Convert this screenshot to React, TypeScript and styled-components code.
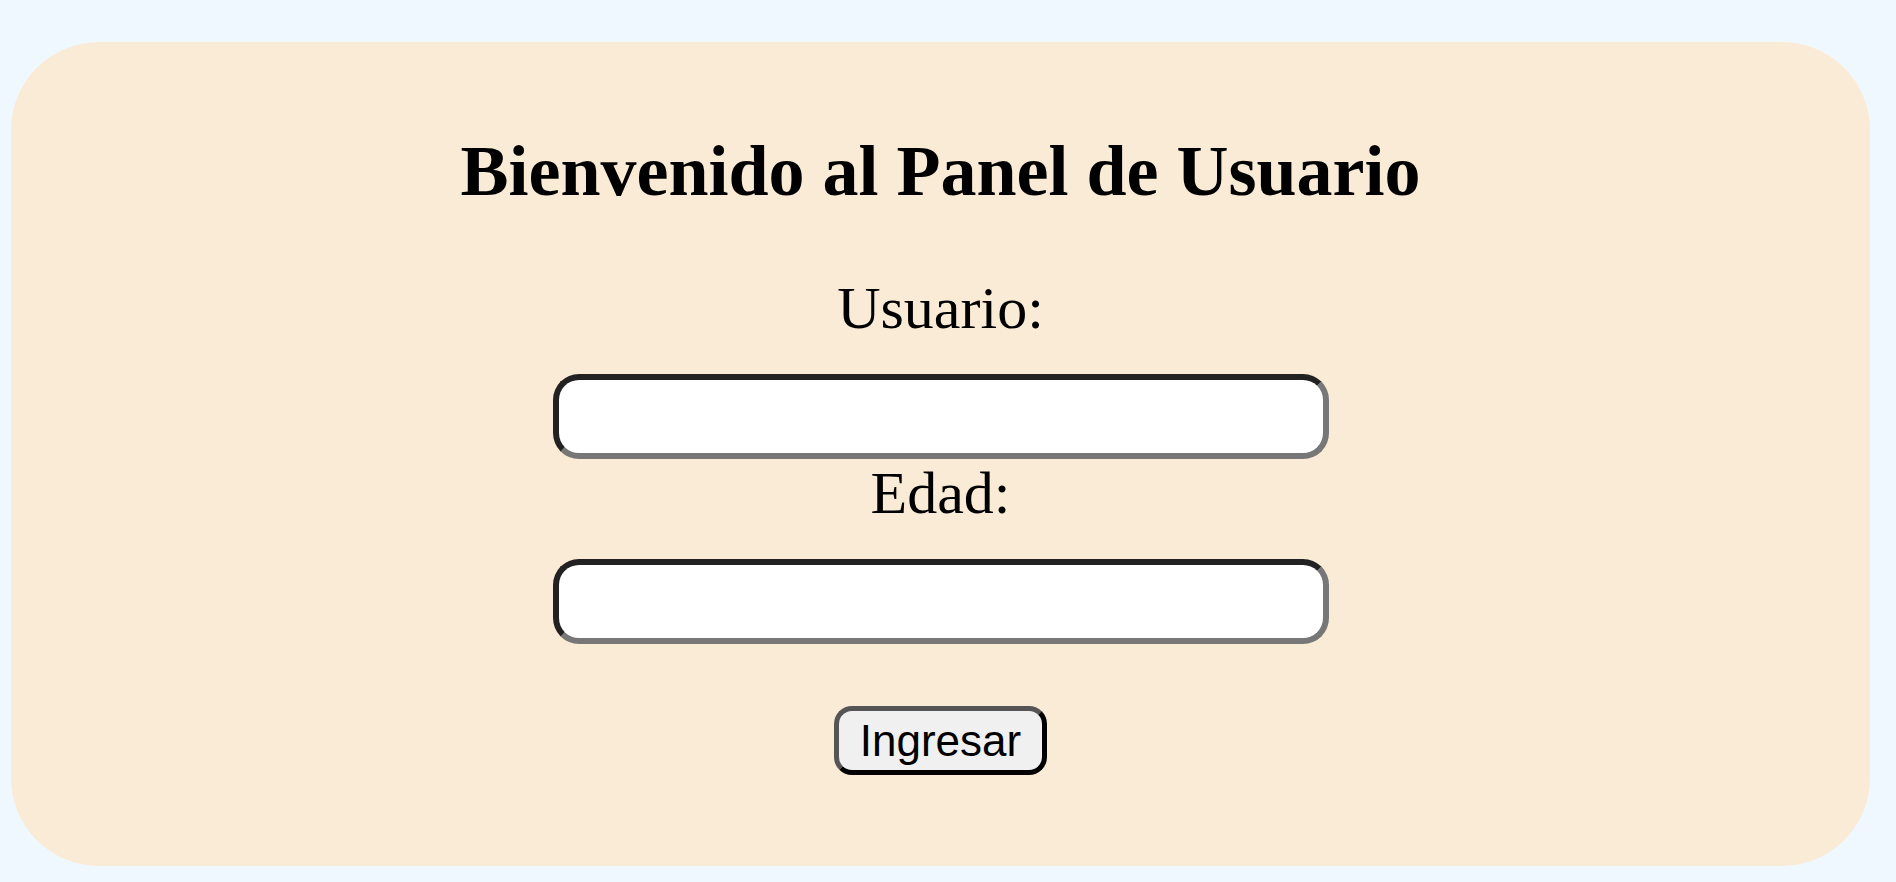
import React from "react";
import styled, { createGlobalStyle } from "styled-components";

const GlobalStyle = createGlobalStyle`
  html, body {
    margin: 0;
    padding: 0;
    background: #f0f8ff;
  }
  body {
    font-family: "Liberation Serif", "Times New Roman", serif;
  }
`;

const Page = styled.div`
  box-sizing: border-box;
  min-height: 882px;
  padding: 42px 26px 16px 11px;
  background: #f0f8ff;
`;

const Card = styled.main`
  box-sizing: border-box;
  width: 1859px;
  height: 824px;
  background: #faebd7;
  border-radius: 88px;
  padding: 88px 0 0;
  display: flex;
  flex-direction: column;
  align-items: center;
`;

const Title = styled.h1`
  margin: 0;
  font-family: "Liberation Serif", "Times New Roman", serif;
  font-weight: 700;
  font-size: 72px;
  line-height: 83px;
  color: #000;
`;

const Form = styled.form`
  display: flex;
  flex-direction: column;
  align-items: center;
  margin-top: 61px;
`;

const Label = styled.label`
  display: block;
  font-family: "Liberation Serif", "Times New Roman", serif;
  font-size: 60px;
  line-height: 69px;
  color: #000;
`;

const TextInput = styled.input`
  box-sizing: border-box;
  display: block;
  width: 776px;
  height: 85px;
  margin: 31px 0 0;
  padding: 0 16px;
  background: #fff;
  border-width: 6px;
  border-style: solid;
  border-color: #222222 #777777 #777777 #222222;
  border-radius: 26px;
  font-family: "Liberation Sans", Arial, sans-serif;
  font-size: 40px;
  outline: none;
`;

const SubmitButton = styled.button`
  box-sizing: border-box;
  margin-top: 62px;
  height: 69px;
  padding: 4px 21px;
  font-family: "Liberation Sans", Arial, sans-serif;
  font-size: 44px;
  line-height: 51px;
  color: #000;
  background: #f0f0f0;
  border-width: 5px;
  border-style: solid;
  border-color: #555555 #000000 #000000 #555555;
  border-radius: 18px;
  cursor: pointer;
`;

export default function App() {
  return (
    <>
      <GlobalStyle />
      <Page>
        <Card>
          <Title>Bienvenido al Panel de Usuario</Title>
          <Form onSubmit={(e) => e.preventDefault()}>
            <Label htmlFor="usuario">Usuario:</Label>
            <TextInput id="usuario" type="text" />
            <Label htmlFor="edad">Edad:</Label>
            <TextInput id="edad" type="text" />
            <SubmitButton type="submit">Ingresar</SubmitButton>
          </Form>
        </Card>
      </Page>
    </>
  );
}
